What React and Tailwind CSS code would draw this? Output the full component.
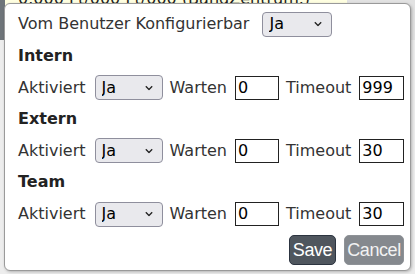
import { useState } from 'react';

const font = { fontFamily: '"DejaVu Sans", Verdana, sans-serif' };

function Chevron() {
    return (
        <svg width="8" height="5" viewBox="0 0 8 5" className="pointer-events-none absolute right-[10px] top-1/2 -translate-y-1/2">
            <path d="M0.8 0.8 L4 4 L7.2 0.8" fill="none" stroke="#222" strokeWidth="1.3" />
        </svg>
    );
}

function YesNo({ value, onChange, wide }) {
    return (
        <div className={`relative ${wide ? 'w-[70px]' : 'w-[68px]'} h-[25px]`}>
            <select
                value={value}
                onChange={(e) => onChange(e.target.value)}
                className="appearance-none w-full h-full pl-[6px] pr-5 text-[16px] leading-none text-black bg-[#e9e9ed] border border-[#8f8f9d] rounded-[4px] outline-none"
            >
                <option value="Ja">Ja</option>
                <option value="Nein">Nein</option>
            </select>
            <Chevron />
        </div>
    );
}

function NumInput({ value, onChange, className }) {
    return (
        <input
            type="text"
            value={value}
            onChange={(e) => onChange(e.target.value)}
            className={`h-[24px] px-[2px] text-[16px] text-black bg-white border border-[#222] rounded-none outline-none ${className}`}
        />
    );
}

function Section({ title, data, setData, last }) {
    const set = (key) => (v) => setData({ ...data, [key]: v });
    return (
        <>
            <div className="h-8 flex items-center font-bold text-[#222]">{title}</div>
            <div className={`${last ? 'h-8' : 'h-[31px]'} flex items-center gap-[7px]`}>
                <span>Aktiviert</span>
                <div className="ml-[2px]">
                    <YesNo value={data.active} onChange={set('active')} />
                </div>
                <span>Warten</span>
                <NumInput value={data.wait} onChange={set('wait')} className="w-[44px] ml-[1px]" />
                <span>Timeout</span>
                <NumInput value={data.timeout} onChange={set('timeout')} className="w-[45px] ml-[1px]" />
            </div>
        </>
    );
}

export default function App() {
    const [configurable, setConfigurable] = useState('Ja');
    const [intern, setIntern] = useState({ active: 'Ja', wait: '0', timeout: '999' });
    const [extern, setExtern] = useState({ active: 'Ja', wait: '0', timeout: '30' });
    const [team, setTeam] = useState({ active: 'Ja', wait: '0', timeout: '30' });

    return (
        <div className="relative w-[415px] h-[274px] overflow-hidden bg-[#ededed]">
            {/* page behind the dialog */}
            <div className="flex h-[40px]">
                <div className="w-[5px] bg-[#6f757a]" />
                <div className="w-[342px] h-[20px] bg-[#ffffe1] overflow-hidden">
                    <div className="-mt-[13px] pl-[13px] text-[16px] text-[#222] whitespace-nowrap" style={font}>
                        0.000 Ft/000 Ft/000 (BandZentrum.)
                    </div>
                </div>
                <div className="flex-1 bg-[#e2e2e2]" />
            </div>

            {/* dialog */}
            <div
                className="absolute left-[4px] top-[3px] w-[407px] h-[268px] bg-white border border-[#9a9a9a] rounded-[6px] shadow-[1px_1px_3px_rgba(0,0,0,0.25)] pt-[4px] pl-[13px] pr-[6px] text-[16px] text-[#333]"
                style={font}
                role="dialog"
            >
                <div className="h-8 flex items-center gap-[13px]">
                    <span>Vom Benutzer Konfigurierbar</span>
                    <YesNo value={configurable} onChange={setConfigurable} wide />
                </div>

                <Section title="Intern" data={intern} setData={setIntern} />
                <Section title="Extern" data={extern} setData={setExtern} />
                <Section title="Team" data={team} setData={setTeam} last />

                <div className="mt-[5px] flex justify-end gap-[8px]" style={{ fontFamily: '"Liberation Sans", Arial, sans-serif' }}>
                    <button className="h-[30px] w-[47px] text-[18px] tracking-[-0.4px] text-white bg-[#4f565e] border border-[#2c3440] rounded-[5px]">
                        Save
                    </button>
                    <button className="h-[30px] w-[60px] text-[18px] tracking-[-0.4px] text-[#f2f2f2] bg-[#85898e] border border-[#8e9297] rounded-[5px]">
                        Cancel
                    </button>
                </div>
            </div>
        </div>
    );
}
